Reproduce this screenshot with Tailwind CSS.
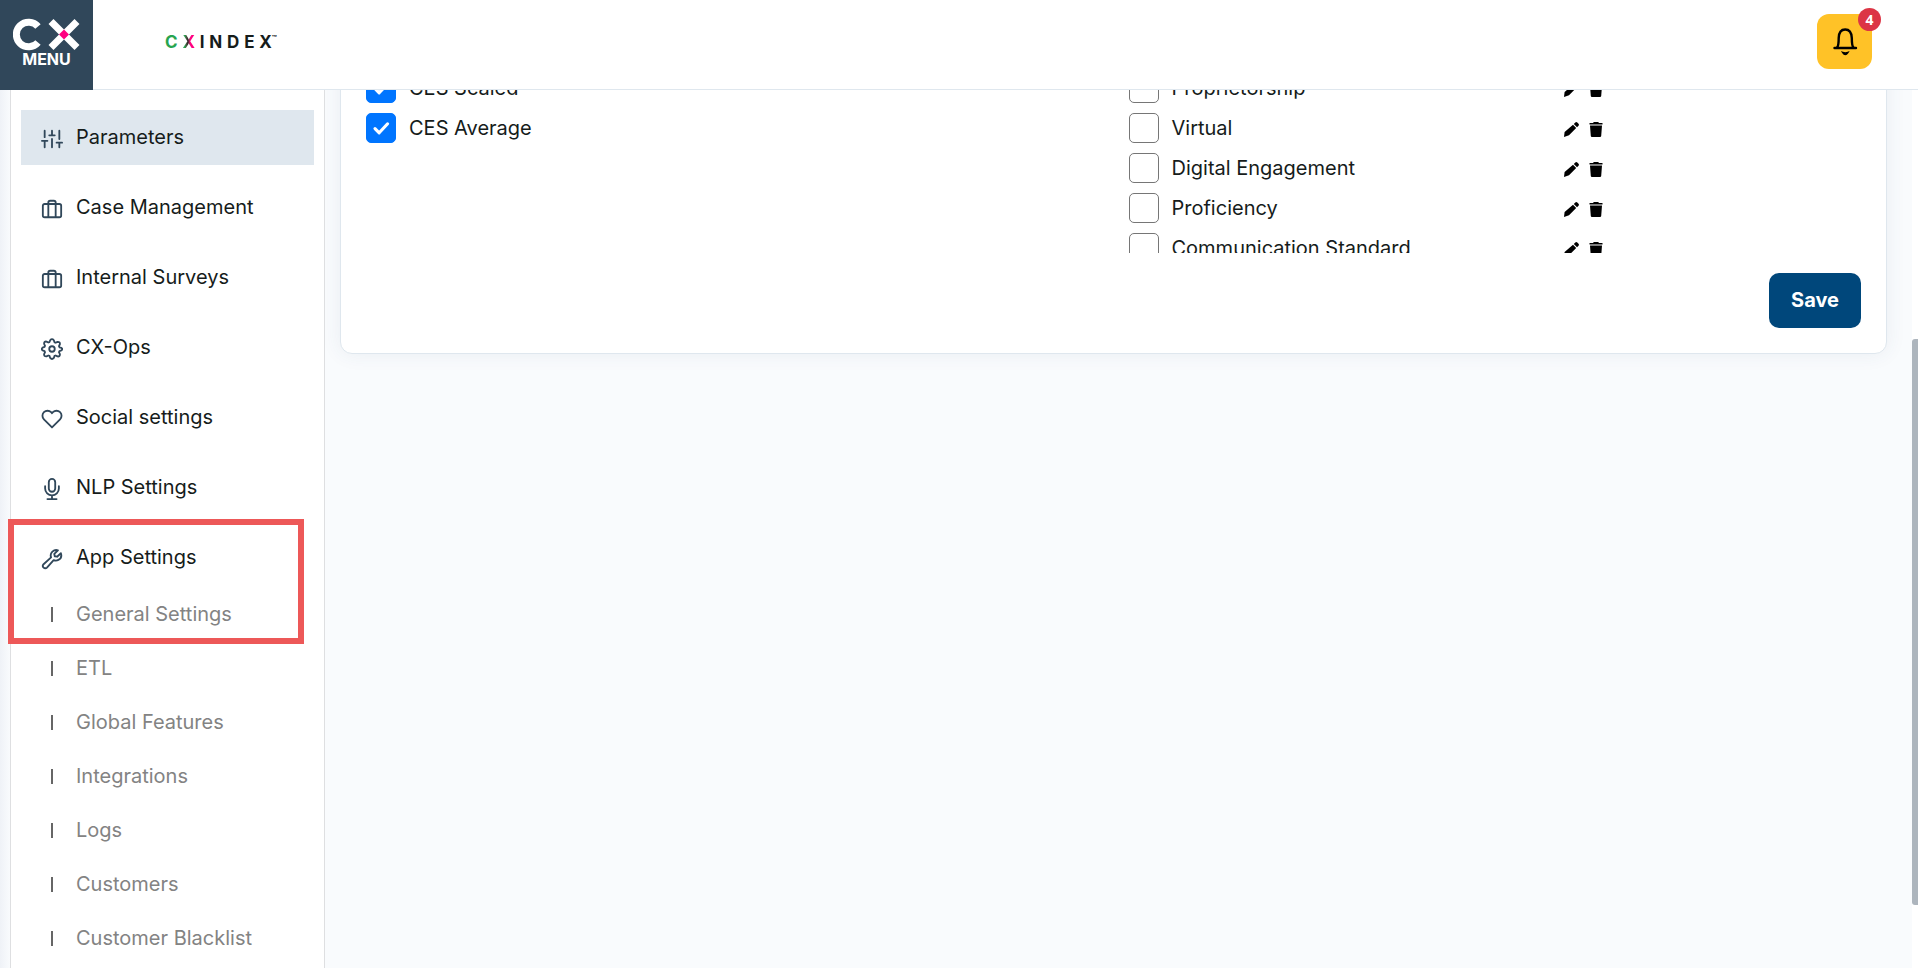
<!DOCTYPE html>
<html lang="en">
<head>
<meta charset="utf-8">
<title>CX Index – Parameters</title>
<script src="https://cdn.jsdelivr.net/npm/@tailwindcss/browser@4"></script>
</head>
<body class="flex h-screen flex-col overflow-hidden bg-[#f9fbfd] font-['Inter',sans-serif] text-xl text-[#161c1b]">
<svg class="hidden">
  <symbol id="check" viewBox="0 0 20 20"><path d="m5 10.5 3.5 3.5L15.5 6.5" fill="none" stroke="#fff" stroke-width="2.6" stroke-linecap="round" stroke-linejoin="round"/></symbol>
  <symbol id="pencil" viewBox="0 0 15 15"><path d="M9 2.8 12.2 6 5 13.2 0 15l.6-5zM9.8 2 11.3.5q1-.8 2 0l1.2 1.2q.9 1 0 2L13 5.2z"/></symbol>
  <symbol id="trash" viewBox="0 0 14 15"><path d="M.5 1H4l.8-1h4.4l.8 1h3.5v1.6H.5zM1 3.6h12L12.2 14q-.1 1-1.200 1H3q-1.100 0-1.200-1z"/></symbol>
  <symbol id="case" viewBox="0 0 24 24"><path d="M4 6.500h16a2 2 0 0 1 2 2V19a2 2 0 0 1-2 2H4a2 2 0 0 1-2-2V8.500a2 2 0 0 1 2-2ZM8 21V5a2 2 0 0 1 2-2h4a2 2 0 0 1 2 2v16"/></symbol>
</svg>

<header class="flex h-[90px] shrink-0 border-b border-[#dfe7ee] bg-white">
  <button class="-mb-px flex w-[93px] shrink-0 flex-col items-center bg-[#30475a] pt-[18px] text-white" aria-label="CX menu">
    <svg class="h-[33px] w-[67px]" viewBox="0 0 67 33" fill="none" stroke="#fff" stroke-width="7">
      <path d="M25 8.500A12.300 12.300 0 1 0 25 24.500"/>
      <path d="m38 3.500 26 26m0-26-26 26"/>
      <path d="m51 11.500 5 5-5 5-5-5z" fill="#ff0080" stroke="none"/>
    </svg>
    <span class="text-base leading-4 font-bold">MENU</span>
  </button>
  <a href="#" aria-label="CX Index" class="ml-[72px] flex w-[112px] items-center justify-between pb-[6px] text-[17px] leading-5 font-bold">
    <span class="text-[#27a550]">C</span>
    <span class="bg-linear-to-r from-[#27a550] from-20% via-[#33202a] via-45% to-[#ff0080] to-65% bg-clip-text text-transparent">X</span>
    <span>I</span><span>N</span><span>D</span><span>E</span>
    <span class="flex">X<span class="text-[8px] leading-3">™</span></span>
  </a>
  <button class="relative mt-[14px] mr-[46px] ml-auto flex size-[55px] items-center justify-center rounded-xl bg-[#ffc227]" aria-label="Notifications">
    <svg class="size-7 text-black" viewBox="0 0 28 28" fill="none" stroke="currentColor" stroke-width="2.400" stroke-linecap="round">
      <path d="M3.500 20h21.500M6 19.500Q7.700 18 7.700 10Q8 1.500 14.200 1.500T20.800 10Q20.800 18 22.500 19.500"/>
      <path d="M11.700 24.500q2.600 4 5.200 0q-2.600 1-5.200 0z" fill="currentColor" stroke-width="1.400"/>
    </svg>
    <span class="absolute -top-[6px] -right-[9px] flex size-[23px] items-center justify-center rounded-full bg-[#dc3545] font-['Open_Sans',sans-serif] text-sm leading-4 font-bold text-white">4</span>
  </button>
</header>

<div class="flex min-h-0 flex-1">
  <div class="w-[10px] shrink-0 bg-linear-to-r from-[#eff2f7] to-[#f9fbfd]"></div>
  <nav class="relative w-[315px] shrink-0 border-x border-[#dedfe1] bg-white px-[10px] pt-5">
    <ul class="flex flex-col gap-[15px] [&_svg]:mt-[5px] [&_svg]:size-[22px] [&_svg]:shrink-0 [&_svg]:fill-none [&_svg]:stroke-[#30475a] [&_svg]:stroke-2">
      <li><a href="#" class="flex h-[55px] items-center gap-[13px] bg-[#dfe7ee] pb-[2px] pl-5"><svg viewBox="0 0 24 24" stroke-linecap="round"><path d="M4 21v-7M4 10V3M12 21v-9M12 8V3M20 21v-5M20 12V3M1 14h6M9 8h6M17 16h6"/></svg>Parameters</a></li>
      <li><a href="#" class="flex h-[55px] items-center gap-[13px] pb-[2px] pl-5"><svg><use href="#case"/></svg>Case Management</a></li>
      <li><a href="#" class="flex h-[55px] items-center gap-[13px] pb-[2px] pl-5"><svg><use href="#case"/></svg>Internal Surveys</a></li>
      <li><a href="#" class="flex h-[55px] items-center gap-[13px] pb-[2px] pl-5"><svg viewBox="0 0 24 24" stroke-linejoin="round"><circle cx="12" cy="12" r="3"/><path d="M10 2.500Q12 0 14 2.500l.7 2.200 1.300.5 2-1q3 -.2 2.600 2.600l-1 2 .5 1.300 2.200.7Q24 12 22.300 13.500l-2.200.7-.5 1.300 1 2q.2 3-2.600 2.600l-2-1-1.300.5-.7 2.200Q12 24 10 21.800l-.7-2.200-1.300-.5-2 1q-3 .2-2.600-2.600l1-2-.5-1.300-2.200-.7Q0 12 1.700 10.500l2.200-.7.5-1.300-1-2q-.2-3 2.600-2.600l2 1 1.300-.5z"/></svg>CX-Ops</a></li>
      <li><a href="#" class="flex h-[55px] items-center gap-[13px] pb-[2px] pl-5"><svg viewBox="0 0 24 24" stroke-linejoin="round"><path d="M20.800 4.600a5.500 5.500 0 0 0-7.800 0L12 5.700l-1-1.100a5.500 5.500 0 0 0-7.800 7.800L12 21.200l8.800-8.800a5.500 5.500 0 0 0 0-7.800z"/></svg>Social settings</a></li>
      <li><a href="#" class="flex h-[55px] items-center gap-[13px] pb-[2px] pl-5"><svg viewBox="0 0 24 24" stroke-linecap="round"><rect x="8.500" y="1" width="7" height="14" rx="3.500"/><path d="M4.500 9v2.500a7.500 7.500 0 0 0 15 0V9M12 19v4M7 23h10"/></svg>NLP Settings</a></li>
      <li>
        <a href="#" class="flex h-[55px] items-center gap-[13px] pb-[2px] pl-5"><svg viewBox="0 0 24 24" stroke-linejoin="round"><path d="M18.500 2.500 14.500 6.500 15 9l2.500.5 4.200-3.800c1 3-.2 6-2.700 7.300-1.800.9-3.700.8-5.200.2L6.500 21.300a2.500 2.500 0 0 1-3.700-3.600L11 10.200c-.8-2-.3-4.500 1.400-6.200 1.700-1.600 4-2.200 6.100-1.500z"/></svg>App Settings</a>
        <ul class="pt-[2px] text-[#838383]">
          <li><a href="#" class="flex h-[54px] items-center pl-[30px]"><i class="mr-[23px] h-[15px] w-[2px] bg-[#666]"></i>General Settings</a></li>
          <li><a href="#" class="flex h-[54px] items-center pl-[30px]"><i class="mr-[23px] h-[15px] w-[2px] bg-[#666]"></i>ETL</a></li>
          <li><a href="#" class="flex h-[54px] items-center pl-[30px]"><i class="mr-[23px] h-[15px] w-[2px] bg-[#666]"></i>Global Features</a></li>
          <li><a href="#" class="flex h-[54px] items-center pl-[30px]"><i class="mr-[23px] h-[15px] w-[2px] bg-[#666]"></i>Integrations</a></li>
          <li><a href="#" class="flex h-[54px] items-center pl-[30px]"><i class="mr-[23px] h-[15px] w-[2px] bg-[#666]"></i>Logs</a></li>
          <li><a href="#" class="flex h-[54px] items-center pl-[30px]"><i class="mr-[23px] h-[15px] w-[2px] bg-[#666]"></i>Customers</a></li>
          <li><a href="#" class="flex h-[54px] items-center pl-[30px]"><i class="mr-[23px] h-[15px] w-[2px] bg-[#666]"></i>Customer Blacklist</a></li>
        </ul>
      </li>
    </ul>
    <div class="pointer-events-none absolute top-[429px] -left-[3px] h-[125px] w-[296px] border-6 border-[#ed5858]"></div>
  </nav>

  <main class="min-w-0 flex-1 overflow-hidden pr-[25px] pl-[15px]">
    <form class="-mt-10 rounded-xl border border-[#dfe7ee] bg-white px-[25px] pt-[17px] pb-[25px] shadow-[0_0_20px_rgba(48,71,120,0.08)]">
      <div class="grid h-[185px] grid-cols-2 gap-[30px] overflow-hidden">
        <ul>
          <li class="flex h-10 items-center"><label class="flex items-center gap-[13px]"><span class="grid"><input type="checkbox" checked class="col-start-1 row-start-1 size-[30px] appearance-none rounded-[5px] border border-[#767676] checked:border-[#0075ff] checked:bg-[#0075ff]"><svg class="col-start-1 row-start-1 m-[3px] size-6"><use href="#check"/></svg></span>CES Scaled</label></li>
          <li class="flex h-10 items-center"><label class="flex items-center gap-[13px]"><span class="grid"><input type="checkbox" checked class="col-start-1 row-start-1 size-[30px] appearance-none rounded-[5px] border border-[#767676] checked:border-[#0075ff] checked:bg-[#0075ff]"><svg class="col-start-1 row-start-1 m-[3px] size-6"><use href="#check"/></svg></span>CES Average</label></li>
        </ul>
        <ul class="[&_button]:mt-[3px]">
          <li class="flex h-10 items-center"><label class="flex w-[435px] items-center gap-[13px]"><input type="checkbox" class="size-[30px] appearance-none rounded-[5px] border border-[#767676]">Proprietorship</label><button type="button" aria-label="Edit"><svg class="size-[15px]"><use href="#pencil"/></svg></button><button type="button" aria-label="Delete" class="ml-[10px]"><svg class="h-[15px] w-[14px]"><use href="#trash"/></svg></button></li>
          <li class="flex h-10 items-center"><label class="flex w-[435px] items-center gap-[13px]"><input type="checkbox" class="size-[30px] appearance-none rounded-[5px] border border-[#767676]">Virtual</label><button type="button" aria-label="Edit"><svg class="size-[15px]"><use href="#pencil"/></svg></button><button type="button" aria-label="Delete" class="ml-[10px]"><svg class="h-[15px] w-[14px]"><use href="#trash"/></svg></button></li>
          <li class="flex h-10 items-center"><label class="flex w-[435px] items-center gap-[13px]"><input type="checkbox" class="size-[30px] appearance-none rounded-[5px] border border-[#767676]">Digital Engagement</label><button type="button" aria-label="Edit"><svg class="size-[15px]"><use href="#pencil"/></svg></button><button type="button" aria-label="Delete" class="ml-[10px]"><svg class="h-[15px] w-[14px]"><use href="#trash"/></svg></button></li>
          <li class="flex h-10 items-center"><label class="flex w-[435px] items-center gap-[13px]"><input type="checkbox" class="size-[30px] appearance-none rounded-[5px] border border-[#767676]">Proficiency</label><button type="button" aria-label="Edit"><svg class="size-[15px]"><use href="#pencil"/></svg></button><button type="button" aria-label="Delete" class="ml-[10px]"><svg class="h-[15px] w-[14px]"><use href="#trash"/></svg></button></li>
          <li class="flex h-10 items-center"><label class="flex w-[435px] items-center gap-[13px]"><input type="checkbox" class="size-[30px] appearance-none rounded-[5px] border border-[#767676]">Communication Standard</label><button type="button" aria-label="Edit"><svg class="size-[15px]"><use href="#pencil"/></svg></button><button type="button" aria-label="Delete" class="ml-[10px]"><svg class="h-[15px] w-[14px]"><use href="#trash"/></svg></button></li>
        </ul>
      </div>
      <div class="mt-5 flex justify-end">
        <button type="button" class="h-[55px] w-[92px] rounded-[10px] bg-[#00477b] pb-[2px] font-bold text-white">Save</button>
      </div>
    </form>
  </main>
  <div class="w-[6px] shrink-0 bg-white pt-[249px]"><div class="h-[566px] rounded-l-[3px] bg-[#adb5bd]"></div></div>
</div>
</body>
</html>
